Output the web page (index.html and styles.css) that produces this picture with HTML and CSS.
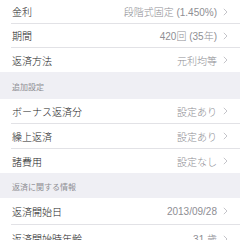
FILE: index.html
```html
<!DOCTYPE html>
<html lang="ja">
<head>
<meta charset="utf-8">
<link rel="stylesheet" href="styles.css">
</head>
<body>
<div class="group">
  <div class="row"><div class="cell"><span class="label">金利</span><span class="value">段階式固定 (1.450%)</span><svg class="chev" width="5" height="8" viewBox="0 0 5 8"><polyline points="0.8,0.8 4,4 0.8,7.2" fill="none" stroke="#c4c4c9" stroke-width="1"/></svg></div></div>
  <div class="row"><div class="cell"><span class="label">期間</span><span class="value">420回 (35年)</span><svg class="chev" width="5" height="8" viewBox="0 0 5 8"><polyline points="0.8,0.8 4,4 0.8,7.2" fill="none" stroke="#c4c4c9" stroke-width="1"/></svg></div></div>
  <div class="row"><div class="cell"><span class="label">返済方法</span><span class="value">元利均等</span><svg class="chev" width="5" height="8" viewBox="0 0 5 8"><polyline points="0.8,0.8 4,4 0.8,7.2" fill="none" stroke="#c4c4c9" stroke-width="1"/></svg></div></div>
</div>
<div class="header">追加設定</div>
<div class="group">
  <div class="row mid"><div class="cell"><span class="label">ボーナス返済分</span><span class="value">設定あり</span><svg class="chev" width="5" height="8" viewBox="0 0 5 8"><polyline points="0.8,0.8 4,4 0.8,7.2" fill="none" stroke="#c4c4c9" stroke-width="1"/></svg></div></div>
  <div class="row mid"><div class="cell"><span class="label">繰上返済</span><span class="value">設定あり</span><svg class="chev" width="5" height="8" viewBox="0 0 5 8"><polyline points="0.8,0.8 4,4 0.8,7.2" fill="none" stroke="#c4c4c9" stroke-width="1"/></svg></div></div>
  <div class="row"><div class="cell"><span class="label">諸費用</span><span class="value">設定なし</span><svg class="chev" width="5" height="8" viewBox="0 0 5 8"><polyline points="0.8,0.8 4,4 0.8,7.2" fill="none" stroke="#c4c4c9" stroke-width="1"/></svg></div></div>
</div>
<div class="header short">返済に関する情報</div>
<div class="group">
  <div class="row tall"><div class="cell"><span class="label">返済開始日</span><span class="value">2013/09/28</span><svg class="chev" width="5" height="8" viewBox="0 0 5 8"><polyline points="0.8,0.8 4,4 0.8,7.2" fill="none" stroke="#c4c4c9" stroke-width="1"/></svg></div></div>
  <div class="row tall"><div class="cell"><span class="label">返済開始時年齢</span><span class="value">31 歳</span><svg class="chev" width="5" height="8" viewBox="0 0 5 8"><polyline points="0.8,0.8 4,4 0.8,7.2" fill="none" stroke="#c4c4c9" stroke-width="1"/></svg></div></div>
</div>
</body>
</html>
```

FILE: styles.css
```css
html, body {
  margin: 0;
  padding: 0;
  background: #efeff4;
  font-family: "Liberation Sans", "Noto Sans CJK JP", sans-serif;
  overflow: hidden;
}
.group {
  background: #ffffff;
}
.row {
  padding-left: 11px;
  height: 24px;
  box-sizing: border-box;
}
.row.mid {
  height: 25px;
}
.row.tall {
  height: 27px;
}
.cell {
  height: 100%;
  box-sizing: border-box;
  display: flex;
  align-items: center;
  padding-left: 1px;
  padding-right: 12px;
  border-bottom: 1px solid #e2e2e6;
}
.row:last-child .cell {
  border-bottom: none;
}
.label {
  flex: 1;
  font-size: 10px;
  font-weight: 300;
  color: #1a1a1a;
  white-space: nowrap;
}
.value {
  font-size: 10px;
  font-weight: 300;
  color: #8e8e93;
  white-space: nowrap;
  margin-right: 6px;
}
.chev {
  display: block;
}
.header {
  height: 27px;
  box-sizing: border-box;
  display: flex;
  align-items: center;
  padding-left: 12px;
  padding-top: 1px;
  font-size: 8px;
  color: #8e8e93;
}
.header.short {
  height: 25px;
}
```
